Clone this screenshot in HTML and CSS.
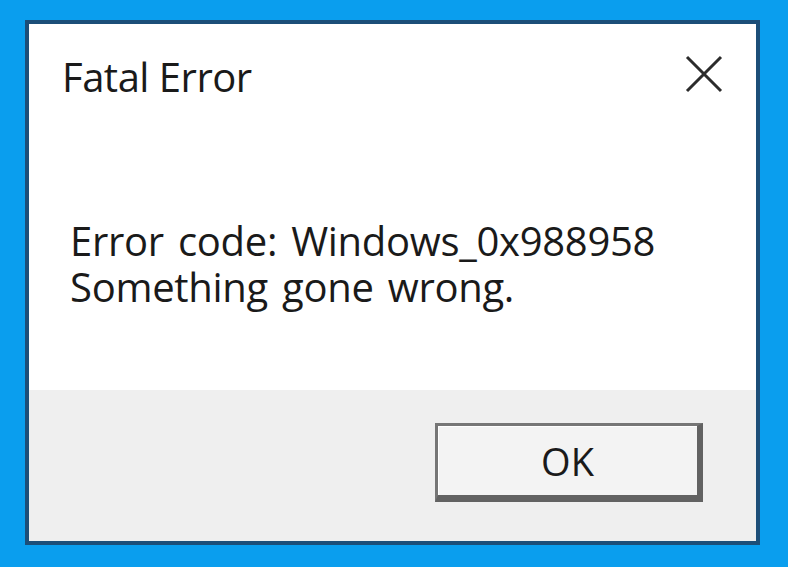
FILE: index.html
```html
<!DOCTYPE html>
<html lang="en">
<head>
<meta charset="utf-8">
<title>Fatal Error</title>
<link rel="stylesheet" href="styles.css">
</head>
<body>
<div class="desktop">
  <div class="dialog">
    <div class="titlebar">
      <div class="title">Fatal Error</div>
      <div class="close" aria-label="Close">
        <svg width="38" height="38" viewBox="0 0 38 38"><path d="M2 2 L36 36 M36 2 L2 36" stroke="#2b2b2b" stroke-width="3" fill="none"/></svg>
      </div>
    </div>
    <div class="content">
      <p class="msg">Error code: Windows_0x988958</p>
      <p class="msg">Something gone wrong.</p>
    </div>
    <div class="footer">
      <button class="ok">OK</button>
    </div>
  </div>
</div>
</body>
</html>
```
FILE: styles.css
```css
html, body {
  margin: 0;
  padding: 0;
}
body {
  background: #0a9eee;
  width: 788px;
  height: 567px;
  overflow: hidden;
  font-family: "Open Sans", "Noto Sans", sans-serif;
}
.desktop {
  padding: 20px 0 0 25px;
}
.dialog {
  width: 727px;
  height: 517px;
  border: 4px solid #1c4e78;
  background: #ffffff;
  display: flex;
  flex-direction: column;
}
.titlebar {
  display: flex;
  justify-content: space-between;
  align-items: flex-start;
  padding: 0 33px 0 33px;
  height: 194px;
  flex: none;
}
.title {
  font-size: 40px;
  line-height: 48px;
  color: #1a1a1a;
  margin-top: 29px;
  letter-spacing: -0.5px;
}
.close {
  margin-top: 31px;
  width: 38px;
  height: 38px;
}
.content {
  padding: 0 0 0 41px;
  flex: 1;
}
.msg {
  margin: 0;
  font-size: 40px;
  line-height: 46px;
  color: #1a1a1a;
  letter-spacing: -0.3px;
  word-spacing: 4px;
}
.footer {
  background: #efefef;
  height: 151px;
  flex: none;
  display: flex;
  justify-content: flex-end;
  align-items: flex-start;
  padding: 33px 53px 0 0;
  box-sizing: border-box;
}
.ok {
  width: 268px;
  height: 79px;
  background: #f3f3f3;
  border-style: solid;
  border-color: #767676 #626262 #626262 #767676;
  border-width: 3px 6px 7px 3px;
  box-shadow: inset 1px 1px 0 #ffffff;
  font-family: "Open Sans", "Noto Sans", sans-serif;
  font-size: 38px;
  color: #1a1a1a;
  padding: 0;
}
```
